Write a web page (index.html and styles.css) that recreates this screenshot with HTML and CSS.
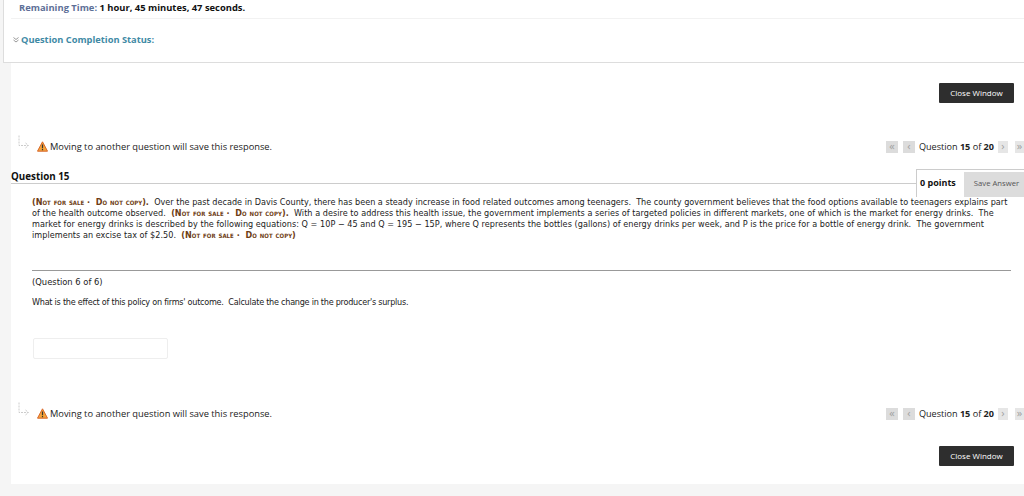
FILE: index.html
```html
<!DOCTYPE html>
<html>
<head>
    <title>Take Test</title>
    <link rel="stylesheet" href="styles.css">
</head>
<body>
    <div class="status">
        <div class="time"><span class="time-label">Remaining Time:</span> 1 hour, 45 minutes, 47 seconds.</div>
        <div class="completion">
            <svg class="chevrons" width="6" height="6" viewBox="0 0 6 6"><path d="M0.5 0.5 L3 2.5 L5.5 0.5 M0.5 3 L3 5 L5.5 3" fill="none" stroke="#999" stroke-width="1"/></svg>
            Question Completion Status:
        </div>
    </div>

    <div class="main">
        <div class="actions"><button class="close-btn">Close Window</button></div>

        <div class="save-row">
            <div class="notice">
                <svg class="bend" width="12" height="16" viewBox="0 0 12 16"><path d="M1 0.5 V10.5 H10 M7.5 8 L10.5 10.5 L7.5 13" fill="none" stroke="#ccc" stroke-width="1" stroke-dasharray="2 1"/></svg>
                <svg class="warn" width="11" height="11" viewBox="0 0 11 11"><path d="M5.5 0.8 L10.5 10.2 H0.5 Z" fill="#f3a33a" stroke="#d8672a" stroke-width="1" stroke-linejoin="round"/><path d="M5.5 3.6 V7.2 M5.5 8 V9.2" stroke="#333" stroke-width="1.2"/></svg>
                Moving to another question will save this response.
            </div>
            <div class="pager">
                <span class="page-btn">«</span>
                <span class="page-btn">‹</span>
                <span class="page-text">Question <b>15</b> of <b>20</b></span>
                <span class="page-btn small">›</span>
                <span class="page-btn last">»</span>
            </div>
        </div>

        <div class="question-head">
            <h3>Question 15</h3>
            <div class="points">
                <b>0 points</b>
                <span class="save-btn">Save Answer</span>
            </div>
        </div>

        <div class="question-body">
            <p class="scenario"><span class="first-line"><span class="stamp">(Not for sale ·&nbsp; Do not copy).</span>&nbsp; Over the past decade in Davis County, there has been a steady increase in food related outcomes among teenagers.&nbsp; The county government believes that the food options available to teenagers explains part</span><br>
            of the health outcome observed.&nbsp; <span class="stamp">(Not for sale ·&nbsp; Do not copy).</span>&nbsp; With a desire to address this health issue, the government implements a series of targeted policies in different markets, one of which is the market for energy drinks.&nbsp; The<br>
            market for energy drinks is described by the following equations: Q = 10P − 45 and Q = 195 − 15P, where Q represents the bottles (gallons) of energy drinks per week, and P is the price for a bottle of energy drink.&nbsp; The government<br>
            implements an excise tax of $2.50.&nbsp; <span class="stamp">(Not for sale ·&nbsp; Do not copy)</span></p>
            <hr>
            <p class="part">(Question 6 of 6)</p>
            <p class="ask">What is the effect of this policy on firms' outcome.&nbsp; Calculate the change in the producer's surplus.</p>
            <input class="answer" type="text">
        </div>

        <div class="save-row lower">
            <div class="notice">
                <svg class="bend" width="12" height="16" viewBox="0 0 12 16"><path d="M1 0.5 V10.5 H10 M7.5 8 L10.5 10.5 L7.5 13" fill="none" stroke="#ccc" stroke-width="1" stroke-dasharray="2 1"/></svg>
                <svg class="warn" width="11" height="11" viewBox="0 0 11 11"><path d="M5.5 0.8 L10.5 10.2 H0.5 Z" fill="#f3a33a" stroke="#d8672a" stroke-width="1" stroke-linejoin="round"/><path d="M5.5 3.6 V7.2 M5.5 8 V9.2" stroke="#333" stroke-width="1.2"/></svg>
                Moving to another question will save this response.
            </div>
            <div class="pager">
                <span class="page-btn">«</span>
                <span class="page-btn">‹</span>
                <span class="page-text">Question <b>15</b> of <b>20</b></span>
                <span class="page-btn small">›</span>
                <span class="page-btn last">»</span>
            </div>
        </div>

        <div class="actions bottom"><button class="close-btn">Close Window</button></div>
    </div>
</body>
</html>
```
FILE: styles.css
```css
body {
    margin: 0;
    height: 496px;
    overflow: hidden;
    background-color: #f5f5f5;
    font-family: "Open Sans", sans-serif;
    color: #222;
}

.status {
    margin-left: 3px;
    height: 63px;
    box-sizing: border-box;
    background-color: white;
    border-left: 1px solid #ddd;
    border-bottom: 1px solid #ddd;
    padding-left: 7px;
    font-weight: bold;
    font-size: 9.4px;
}

.time {
    height: 18px;
    line-height: 15px;
    padding-left: 8px;
    border-bottom: 1px solid #f2f2f2;
    color: #111;
}

.time-label {
    color: #5d6f97;
}

.completion {
    display: flex;
    align-items: center;
    gap: 2px;
    padding-top: 14px;
    padding-left: 2px;
    font-size: 9.3px;
    line-height: 14px;
    color: #3f8aa5;
}

.main {
    margin-left: 11px;
    height: 421px;
    background-color: white;
}

.actions {
    display: flex;
    justify-content: flex-end;
    padding: 20px 10px 0 0;
}

.actions.bottom {
    padding-top: 25px;
}

.close-btn {
    width: 75px;
    height: 20px;
    padding: 0 0 2px;
    border: none;
    border-radius: 1px;
    background-color: #2e2e2e;
    color: white;
    font-family: "Open Sans", sans-serif;
    font-size: 8px;
}

.save-row {
    display: flex;
    justify-content: space-between;
    align-items: center;
    height: 16px;
    margin-top: 35px;
}

.save-row.lower {
    margin-top: 46px;
}

.notice {
    display: flex;
    align-items: center;
    padding-left: 7px;
    font-size: 9.3px;
    color: #222;
}

.bend {
    margin-top: -6px;
    margin-right: 7px;
}

.warn {
    margin-right: 2px;
}

.pager {
    display: flex;
    align-items: center;
    padding-top: 1px;
    font-size: 9.1px;
    white-space: nowrap;
}

.page-btn {
    display: block;
    width: 12px;
    height: 12px;
    margin-right: 5px;
    background-color: #dcdcdc;
    color: #a0a0a0;
    font-size: 11px;
    line-height: 10px;
    text-align: center;
}

.page-btn.small {
    width: 10px;
    margin-right: 7px;
    background-color: #e6e6e6;
}

.page-btn.last {
    width: 9px;
    margin-right: 0;
    background-color: #e6e6e6;
}

.page-text {
    margin-left: -1px;
    margin-right: 4px;
}

.question-head {
    display: flex;
    justify-content: space-between;
    align-items: flex-start;
    height: 28px;
    margin-top: 15px;
}

.question-head h3 {
    flex: 1;
    margin: 0;
    height: 14px;
    border-bottom: 1px solid #ccc;
    font-size: 9.8px;
    line-height: 15px;
    color: #111;
}

.points {
    display: flex;
    width: 108px;
    height: 28px;
    box-sizing: border-box;
    border-top: 1px solid #ccc;
    border-left: 1px solid #ccc;
    font-size: 9px;
    line-height: 26px;
}

.points b {
    width: 47px;
    padding-left: 3px;
    box-sizing: border-box;
    color: #111;
}

.save-btn {
    flex: 1;
    margin-top: 2px;
    padding-left: 5px;
    background-color: #dcdcdc;
    font-size: 7.7px;
    line-height: 22px;
    text-align: center;
    color: #555;
}

.question-body {
    padding-left: 21px;
    font-family: "DejaVu Sans", sans-serif;
    font-stretch: condensed;
    font-size: 9px;
    color: #222;
}

.question-body p {
    margin: 0;
}

.scenario {
    line-height: 11px;
    letter-spacing: 0.04px;
    white-space: nowrap;
}

.first-line {
    letter-spacing: 0.017px;
}

.stamp {
    font-variant: small-caps;
    font-weight: bold;
    color: #6e3d14;
}

hr {
    margin: 29px 13px 0 0;
    border: none;
    border-top: 1px solid #999;
}

.part {
    margin-top: 5px !important;
    font-size: 9.3px;
    line-height: 12px;
}

.ask {
    margin-top: 8px !important;
    letter-spacing: -0.25px;
    line-height: 12px;
}

.answer {
    display: block;
    box-sizing: border-box;
    width: 135px;
    height: 21px;
    margin: 30px 0 0 1px;
    padding: 0;
    border: 1px solid #eee;
    border-radius: 2px;
    background-color: white;
}
```
